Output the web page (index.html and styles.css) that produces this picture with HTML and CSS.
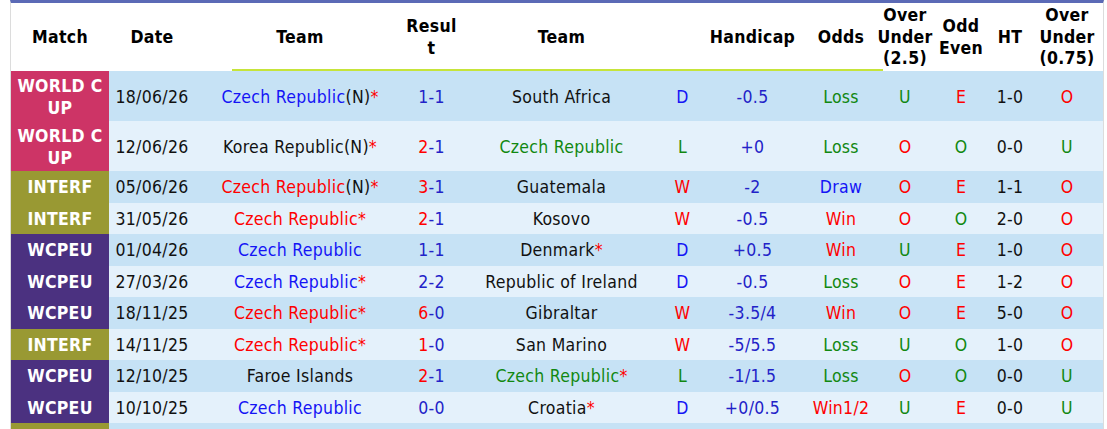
FILE: index.html
```html
<!DOCTYPE html>
<html lang="en">
<head>
<meta charset="utf-8">
<title>Czech Republic - recent matches</title>
<link rel="stylesheet" href="styles.css">
</head>
<body>
<div class="board">
  <table class="games">
    <colgroup>
      <col class="c-match"><col class="c-date"><col class="c-team"><col class="c-res"><col class="c-team2"><col class="c-wdl"><col class="c-hdp"><col class="c-odds"><col class="c-ou"><col class="c-oe"><col class="c-ht"><col class="c-ou2">
    </colgroup>
    <thead>
      <tr>
        <th>Match</th><th>Date</th><th>Team</th><th class="brk">Result</th><th>Team</th><th></th><th>Handicap</th><th>Odds</th><th>Over Under (2.5)</th><th>Odd Even</th><th>HT</th><th>Over Under (0.75)</th>
      </tr>
    </thead>
    <tbody>
      <tr class="tall">
        <td class="lg wc">WORLD CUP</td><td>18/06/26</td>
        <td><span class="b">Czech Republic</span>(N)<span class="r">*</span></td>
        <td class="sc">1-1</td><td>South Africa</td>
        <td class="b">D</td><td class="h">-0.5</td><td class="g">Loss</td><td class="g">U</td><td class="r">E</td><td>1-0</td><td class="r">O</td>
      </tr>
      <tr class="tall">
        <td class="lg wc">WORLD CUP</td><td>12/06/26</td>
        <td>Korea Republic(N)<span class="r">*</span></td>
        <td class="sc"><span class="r">2</span>-1</td><td class="g">Czech Republic</td>
        <td class="g">L</td><td class="h">+0</td><td class="g">Loss</td><td class="r">O</td><td class="g">O</td><td>0-0</td><td class="g">U</td>
      </tr>
      <tr>
        <td class="lg it">INTERF</td><td>05/06/26</td>
        <td><span class="r">Czech Republic</span>(N)<span class="r">*</span></td>
        <td class="sc"><span class="r">3</span>-1</td><td>Guatemala</td>
        <td class="r">W</td><td class="h">-2</td><td class="b">Draw</td><td class="r">O</td><td class="r">E</td><td>1-1</td><td class="r">O</td>
      </tr>
      <tr>
        <td class="lg it">INTERF</td><td>31/05/26</td>
        <td><span class="r">Czech Republic*</span></td>
        <td class="sc"><span class="r">2</span>-1</td><td>Kosovo</td>
        <td class="r">W</td><td class="h">-0.5</td><td class="r">Win</td><td class="r">O</td><td class="g">O</td><td>2-0</td><td class="r">O</td>
      </tr>
      <tr>
        <td class="lg eu">WCPEU</td><td>01/04/26</td>
        <td><span class="b">Czech Republic</span></td>
        <td class="sc">1-1</td><td>Denmark<span class="r">*</span></td>
        <td class="b">D</td><td class="h">+0.5</td><td class="r">Win</td><td class="g">U</td><td class="r">E</td><td>1-0</td><td class="r">O</td>
      </tr>
      <tr>
        <td class="lg eu">WCPEU</td><td>27/03/26</td>
        <td><span class="b">Czech Republic</span><span class="r">*</span></td>
        <td class="sc">2-2</td><td>Republic of Ireland</td>
        <td class="b">D</td><td class="h">-0.5</td><td class="g">Loss</td><td class="r">O</td><td class="r">E</td><td>1-2</td><td class="r">O</td>
      </tr>
      <tr>
        <td class="lg eu">WCPEU</td><td>18/11/25</td>
        <td><span class="r">Czech Republic*</span></td>
        <td class="sc"><span class="r">6</span>-0</td><td>Gibraltar</td>
        <td class="r">W</td><td class="h">-3.5/4</td><td class="r">Win</td><td class="r">O</td><td class="r">E</td><td>5-0</td><td class="r">O</td>
      </tr>
      <tr>
        <td class="lg it">INTERF</td><td>14/11/25</td>
        <td><span class="r">Czech Republic*</span></td>
        <td class="sc"><span class="r">1</span>-0</td><td>San Marino</td>
        <td class="r">W</td><td class="h">-5/5.5</td><td class="g">Loss</td><td class="g">U</td><td class="g">O</td><td>1-0</td><td class="r">O</td>
      </tr>
      <tr>
        <td class="lg eu">WCPEU</td><td>12/10/25</td>
        <td>Faroe Islands</td>
        <td class="sc"><span class="r">2</span>-1</td><td><span class="g">Czech Republic</span><span class="r">*</span></td>
        <td class="g">L</td><td class="h">-1/1.5</td><td class="g">Loss</td><td class="r">O</td><td class="g">O</td><td>0-0</td><td class="g">U</td>
      </tr>
      <tr>
        <td class="lg eu">WCPEU</td><td>10/10/25</td>
        <td><span class="b">Czech Republic</span></td>
        <td class="sc">0-0</td><td>Croatia<span class="r">*</span></td>
        <td class="b">D</td><td class="h">+0/0.5</td><td class="r">Win1/2</td><td class="g">U</td><td class="r">E</td><td>0-0</td><td class="g">U</td>
      </tr>
      <tr class="peek">
        <td class="lg it"></td><td></td><td></td><td></td><td></td><td></td><td></td><td></td><td></td><td></td><td></td><td></td>
      </tr>
    </tbody>
  </table>
</div>
</body>
</html>
```

FILE: styles.css
```css
html, body {
  margin: 0;
  padding: 0;
  background: #ffffff;
}

body {
  font-family: "DejaVu Sans Condensed", "DejaVu Sans", sans-serif;
  font-stretch: condensed;
  font-size: 17.5px;
  letter-spacing: 0.3px;
  color: #111111;
}

.board {
  position: relative;
  margin-left: 10px;
  width: 1092px;
  border-left: 1px solid #dcdcdc;
  border-right: 1px solid #dcdcdc;
  border-top: 3px solid #5b6ab6;
}

.board::after {
  content: "";
  position: absolute;
  left: 221px;
  top: 66px;
  width: 651px;
  height: 2px;
  background: #c6e43a;
}

.games {
  width: 1092px;
  table-layout: fixed;
  border-collapse: collapse;
  border-spacing: 0;
}

.c-match { width: 98px; }
.c-date { width: 86px; }
.c-team { width: 210px; }
.c-res { width: 53px; }
.c-team2 { width: 207px; }
.c-wdl { width: 35px; }
.c-hdp { width: 105px; }
.c-odds { width: 72px; }
.c-ou { width: 56px; }
.c-oe { width: 56px; }
.c-ht { width: 42px; }
.c-ou2 { width: 72px; }

.games th {
  height: 67px;
  padding: 1px 0 0;
  font-weight: bold;
  line-height: 21.5px;
  color: #000000;
  text-align: center;
  vertical-align: middle;
}

.games th.brk {
  word-break: break-all;
}

.games td {
  padding: 1px 0 0;
  height: 30.5px;
  text-align: center;
  vertical-align: middle;
  line-height: 22px;
  white-space: nowrap;
}

.games tr.tall td {
  height: 49px;
}

.games tbody tr:nth-child(odd) { background: #c6e2f5; }
.games tbody tr:nth-child(even) { background: #e4f1fb; }

.games td.lg {
  padding: 1px 6px 0;
  color: #ffffff;
  font-weight: bold;
  white-space: normal;
  word-break: break-all;
}

.wc { background: #cd3466; }
.it { background: #999933; }
.eu { background: #4b3180; }

.b { color: #1414f5; }
.r { color: #ff0000; }
.g { color: #118811; }
.h { color: #2222c8; }
.sc { color: #2222c8; }
```
